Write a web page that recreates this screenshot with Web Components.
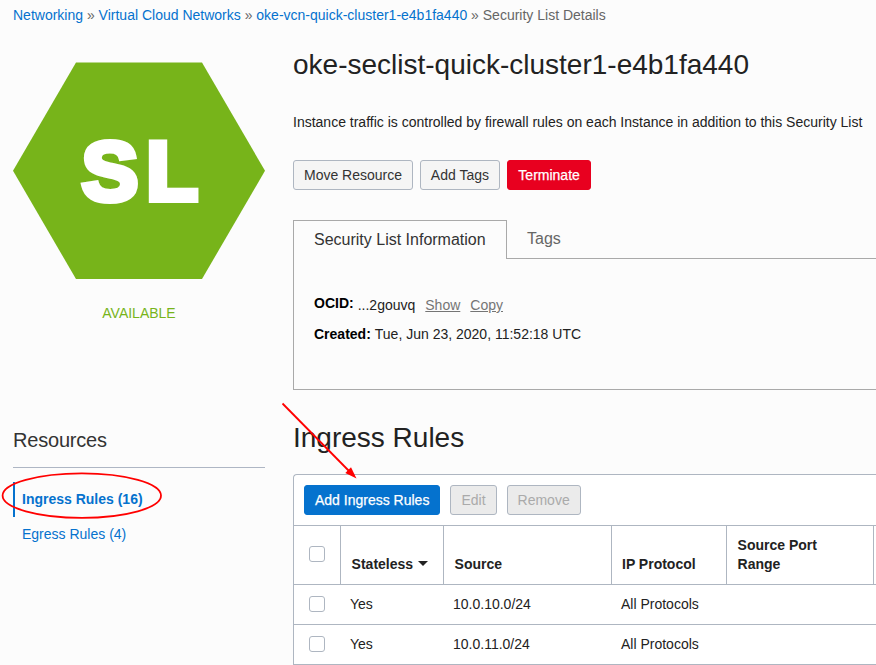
<!DOCTYPE html>
<html lang="en">
<head>
<meta charset="utf-8">
<title>Security List Details</title>
<style>
body { margin: 0; background: #fcfcfc; font: 14px/20px "Liberation Sans", Arial, sans-serif; color: #000; overflow: hidden; }
</style>
</head>
<body>
<security-page></security-page>
<script>
const define = (name, html, setup) => customElements.define(name, class extends HTMLElement {
  constructor() {
    super();
    const t = document.createElement('template');
    t.innerHTML = html;
    this.attachShadow({ mode: 'open' }).append(t.content.cloneNode(true));
  }
  connectedCallback() { if (setup) setup(this, this.shadowRoot); }
});

define('crumb-trail', `
<style>
:host { display: block; height: 20px; padding: 5px 0 0 13px; color: #666; white-space: nowrap; }
::slotted(a) { color: #0572ce; text-decoration: none; }
</style><slot></slot>`);

define('ui-button', `
<style>
:host { display: inline-flex; }
button { box-sizing: border-box; height: 30px; margin: 0; padding: 0 10px; border: 1px solid #aeb6c1; border-radius: 3px; background: #f5f5f5; color: #333; font: inherit; line-height: 28px; white-space: nowrap; }
:host([kind=danger]) button { background: #e8001f; border-color: #e8001f; padding: 0 10.6px; color: #fff; -webkit-text-stroke: .25px #fff; }
:host([kind=primary]) button { background: #0572ce; border-color: #0572ce; color: #fff; -webkit-text-stroke: .25px #fff; }
:host([disabled]) button { background: #ebebeb; color: #aaa; }
</style><button><slot></slot></button>`, (el, root) => {
  root.querySelector('button').tabIndex = el.hasAttribute('disabled') ? -1 : 0;
});

define('status-hexagon', `
<style>
:host { display: block; width: 252px; color: #77b41a; text-align: center; }
svg { display: block; }
text { font: bold 83px "Liberation Sans", Arial, sans-serif; fill: #fff; stroke: #fff; stroke-width: 6; stroke-linejoin: miter; }
div { margin-top: 24px; }
</style>
<svg width="252" height="217" viewBox="0 0 252 217">
<path d="M63 .6H189L252 108.8L189 217H63L0 108.8Z" fill="#77b41a"/>
<text transform="scale(1.02 1)" x="67.4 130.7" y="138">SL</text>
</svg>
<div><slot></slot></div>`);

define('nav-item', `
<style>
:host { display: block; height: 35px; line-height: 35px; padding-left: 7px; border-left: 2px solid transparent; color: #0572ce; }
:host([active]) { border-left-color: #0572ce; font-weight: bold; }
</style><slot></slot>`);

define('resource-nav', `
<style>
:host { display: block; position: relative; margin-top: 105px; }
h2 { margin: 0; height: 39px; border-bottom: 1px solid #aeb6c4; font-size: 20px; line-height: 24px; font-weight: normal; letter-spacing: -.2px; color: #333; }
nav { padding-top: 14px; }
svg { position: absolute; left: -13px; top: 42px; }
</style>
<h2>Resources</h2>
<nav><nav-item active>Ingress Rules (16)</nav-item><nav-item>Egress Rules (4)</nav-item></nav>
<svg width="170" height="52"><ellipse cx="81.8" cy="25.6" rx="79.2" ry="22.3" fill="none" stroke="#f00" stroke-width="1.8"/></svg>`);

define('info-tabs', `
<style>
:host { display: block; height: 170px; margin-top: 30px; }
.bar { display: flex; height: 39px; font-size: 16px; }
.on { box-sizing: border-box; width: 214px; border: 1px solid #a9a9a9; border-bottom: 0; padding-left: 20px; line-height: 38px; color: #333; }
.off { flex: 1; box-sizing: border-box; border-bottom: 1px solid #a9a9a9; padding-left: 20px; line-height: 38px; color: #666; }
.body { box-sizing: border-box; height: 131px; border: solid #a9a9a9; border-width: 0 0 1px 1px; padding: 34px 0 0 20px; }
.row { display: flex; align-items: flex-start; height: 31px; white-space: nowrap; }
b { margin-right: 4px; }
.id { display: flex; gap: 10px; padding-top: 2px; }
u { color: #757575; }
.v { color: #222; }
</style>
<div class="bar"><div class="on">Security List Information</div><div class="off">Tags</div></div>
<div class="body">
<div class="row"><b>OCID:</b><div class="id"><span class="v">...2gouvq</span><u>Show</u><u>Copy</u></div></div>
<div class="row"><b>Created:</b><span class="v">Tue, Jun 23, 2020, 11:52:18 UTC</span></div>
</div>`);

define('check-box', `
<style>
:host { display: block; box-sizing: border-box; width: 16px; height: 16px; border: 1px solid #aeb6c1; border-radius: 3px; background: #fff; }
</style>`);

define('rule-row', `
<style>
:host { display: grid; grid-template-columns: 46px 103px 168px 115px 147px 1fr; box-sizing: border-box; height: 40px; padding-bottom: 1px; align-items: center; border-bottom: 1px solid #aeb6c1; color: #222; }
check-box { margin-left: 15px; }
span { padding-left: 10px; }
</style>
<check-box></check-box>
<span><slot name="stateless"></slot></span><span><slot name="source"></slot></span><span><slot name="protocol"></slot></span>`);

define('rules-table', `
<style>
:host { display: block; width: 640px; box-sizing: border-box; border: solid #aeb6c1; border-width: 1px 0 0 1px; border-radius: 4px 0 0 0; background: #fff; }
.tools { display: flex; gap: 10px; height: 40px; padding: 10px 10px 0; border-bottom: 1px solid #aeb6c1; }
.head { display: grid; grid-template-columns: 46px 103px 168px 115px 147px 1fr; height: 58px; border-bottom: 1px solid #aeb6c1; font-weight: bold; line-height: 19px; color: #222; }
.head > div { box-sizing: border-box; display: flex; align-items: flex-end; padding: 0 9px 10px 10.6px; border-left: 1px solid #aeb6c1; }
.head > .c { align-items: flex-start; border: 0; padding: 20px 0 0 15px; }
.head > .p { padding-left: 10px; }
svg { margin: 0 0 8px 5px; }
</style>
<div class="tools"><ui-button kind="primary">Add Ingress Rules</ui-button><ui-button disabled>Edit</ui-button><ui-button disabled>Remove</ui-button></div>
<div class="head"><div class="c"><check-box></check-box></div>
<div>Stateless<svg width="10" height="5"><path d="M0 0H10L5 5Z" fill="#222"/></svg></div>
<div>Source</div><div class="p">IP Protocol</div><div>Source Port<br>Range</div><div></div></div>
<slot></slot>`);

define('red-arrow', `
<style>
:host { position: absolute; left: 280px; top: 400px; width: 80px; height: 80px; pointer-events: none; }
svg { display: block; }
</style>
<svg width="80" height="80"><path d="M2.5 3.5L69 71" stroke="#f00" stroke-width="1.8"/><path d="M76.5 78.5L65.3 73.1L71 67.3Z" fill="#f00"/></svg>`);

define('security-page', `
<style>
:host { display: block; position: relative; height: 665px; overflow: hidden; }
.cols { display: grid; grid-template-columns: 252px 1fr; column-gap: 28px; padding-left: 13px; }
.left { padding-top: 37px; }
.right { min-width: 0; padding-top: 23px; }
h1, h2 { margin: 0; font-size: 28px; line-height: 34px; font-weight: normal; color: #222; white-space: nowrap; }
p { margin: 30px 0 28px; color: #222; white-space: nowrap; }
.actions { display: flex; gap: 6.8px; }
h2 { margin: 31px 0 19px; }
</style>
<crumb-trail><a>Networking</a> » <a>Virtual Cloud Networks</a> » <a>oke-vcn-quick-cluster1-e4b1fa440</a> » Security List Details</crumb-trail>
<div class="cols">
<div class="left"><status-hexagon>AVAILABLE</status-hexagon><resource-nav></resource-nav></div>
<div class="right">
<h1>oke-seclist-quick-cluster1-e4b1fa440</h1>
<p>Instance traffic is controlled by firewall rules on each Instance in addition to this Security List</p>
<div class="actions"><ui-button>Move Resource</ui-button><ui-button>Add Tags</ui-button><ui-button kind="danger">Terminate</ui-button></div>
<info-tabs></info-tabs>
<h2>Ingress Rules</h2>
<rules-table>
<rule-row><span slot="stateless">Yes</span><span slot="source">10.0.10.0/24</span><span slot="protocol">All Protocols</span></rule-row>
<rule-row><span slot="stateless">Yes</span><span slot="source">10.0.11.0/24</span><span slot="protocol">All Protocols</span></rule-row>
</rules-table>
</div>
</div>
<red-arrow></red-arrow>`);
</script>
</body>
</html>
